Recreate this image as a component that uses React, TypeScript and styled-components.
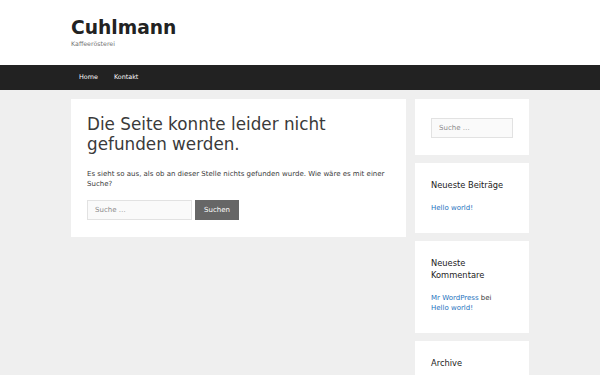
import React from 'react';
import styled, { createGlobalStyle } from 'styled-components';

const GlobalStyle = createGlobalStyle`
  html, body {
    margin: 0;
    padding: 0;
    background: #efefef;
    font-family: "DejaVu Sans", Verdana, sans-serif;
    color: #3a3a3a;
  }
  * {
    box-sizing: border-box;
  }
`;

const Header = styled.header`
  background: #fff;
  padding: 16px 0 17px;
`;

const Container = styled.div`
  width: 458px;
  margin: 0 auto;
`;

const SiteTitle = styled.h1`
  margin: 0;
  font-size: 18.7px;
  line-height: 24px;
  font-weight: bold;
  color: #222;
`;

const Tagline = styled.p`
  margin: 0;
  font-size: 6.3px;
  line-height: 8px;
  color: #757575;
`;

const NavBar = styled.nav`
  background: #222;
`;

const NavList = styled.ul`
  display: flex;
  list-style: none;
  margin: 0 auto;
  padding: 0;
  width: 458px;
`;

const NavItem = styled.li`
  padding: 0 8px;
  line-height: 25px;
  font-size: 6.4px;
  color: #fff;
`;

const Content = styled.div`
  display: flex;
  gap: 9px;
  align-items: flex-start;
  padding-top: 9px;
`;

const MainCard = styled.main`
  width: 335px;
  background: #fff;
  padding: 16px 16px 17px;
`;

const PageTitle = styled.h2`
  margin: 0 0 15px;
  font-size: 16.8px;
  line-height: 19.5px;
  font-weight: normal;
  color: #3a3a3a;
`;

const Text = styled.p`
  margin: 0 0 11px;
  font-size: 7px;
  line-height: 10px;
`;

const SearchForm = styled.form`
  display: flex;
  gap: 3px;
`;

const SearchInput = styled.input<{ $width: number }>`
  width: ${p => p.$width}px;
  height: 20px;
  padding: 0 7px;
  border: 1px solid #e2e2e2;
  background: #fafafa;
  font-family: inherit;
  font-size: 7px;
  color: #666;
  outline: none;

  &::placeholder {
    color: #8a8a8a;
  }
`;

const SearchButton = styled.button`
  width: 44px;
  height: 20px;
  border: none;
  background: #666;
  color: #fff;
  font-family: inherit;
  font-size: 7px;
  padding: 0;
`;

const Sidebar = styled.aside`
  width: 114px;
  display: flex;
  flex-direction: column;
  gap: 8px;
`;

const Widget = styled.section<{ $bottom?: number }>`
  background: #fff;
  padding: 16px 16px ${p => p.$bottom ?? 20}px;
`;

const WidgetTitle = styled.h3`
  margin: 0 0 12px;
  font-size: 8.3px;
  line-height: 12px;
  font-weight: normal;
  color: #222;
`;

const WidgetList = styled.ul`
  list-style: none;
  margin: 0;
  padding: 0;
  font-size: 7px;
  line-height: 10px;
`;

const Link = styled.a`
  color: #1e73be;
  text-decoration: none;
  white-space: nowrap;
`;

export default function App() {
  return (
    <>
      <GlobalStyle />
      <Header>
        <Container>
          <SiteTitle>Cuhlmann</SiteTitle>
          <Tagline>Kaffeerösterei</Tagline>
        </Container>
      </Header>
      <NavBar>
        <NavList>
          <NavItem>Home</NavItem>
          <NavItem>Kontakt</NavItem>
        </NavList>
      </NavBar>
      <Container>
        <Content>
          <MainCard>
            <PageTitle>Die Seite konnte leider nicht gefunden werden.</PageTitle>
            <Text>
              Es sieht so aus, als ob an dieser Stelle nichts gefunden wurde. Wie wäre es mit einer Suche?
            </Text>
            <SearchForm>
              <SearchInput $width={105} placeholder="Suche …" />
              <SearchButton type="button">Suchen</SearchButton>
            </SearchForm>
          </MainCard>
          <Sidebar>
            <Widget $bottom={17}>
              <SearchInput $width={82} placeholder="Suche …" />
            </Widget>
            <Widget>
              <WidgetTitle>Neueste Beiträge</WidgetTitle>
              <WidgetList>
                <li><Link href="#">Hello world!</Link></li>
              </WidgetList>
            </Widget>
            <Widget>
              <WidgetTitle>Neueste Kommentare</WidgetTitle>
              <WidgetList>
                <li>
                  <Link href="#">Mr WordPress</Link> bei <Link href="#">Hello world!</Link>
                </li>
              </WidgetList>
            </Widget>
            <Widget>
              <WidgetTitle>Archive</WidgetTitle>
            </Widget>
          </Sidebar>
        </Content>
      </Container>
    </>
  );
}
